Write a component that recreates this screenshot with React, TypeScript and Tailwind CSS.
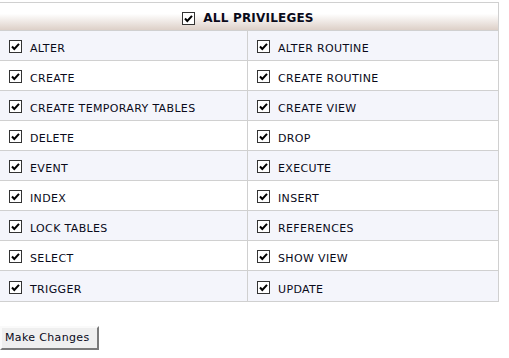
import React from 'react';

const rows: [string, string][] = [
  ['ALTER', 'ALTER ROUTINE'],
  ['CREATE', 'CREATE ROUTINE'],
  ['CREATE TEMPORARY TABLES', 'CREATE VIEW'],
  ['DELETE', 'DROP'],
  ['EVENT', 'EXECUTE'],
  ['INDEX', 'INSERT'],
  ['LOCK TABLES', 'REFERENCES'],
  ['SELECT', 'SHOW VIEW'],
  ['TRIGGER', 'UPDATE'],
];

// old-style checked box
function Check() {
  return (
    <span className="inline-flex h-[13px] w-[13px] shrink-0 items-center justify-center border border-[#333] bg-white">
      <svg width="9" height="9" viewBox="0 0 9 9">
        <path d="M1 4.5 L3.3 7 L8 1.8" fill="none" stroke="#000" strokeWidth="2" />
      </svg>
    </span>
  );
}

function Cell({ label }: { label: string }) {
  return (
    <div className="flex items-center gap-[8px] pl-[9px] pt-[2px]">
      <Check />
      <span className="relative top-[3px]">{label}</span>
    </div>
  );
}

export default function App() {
  return (
    <div className="h-[358px] w-[509px] bg-white pt-[2px] text-[11px] tracking-[0.35px] text-[#0a0a1a] font-['DejaVu_Sans',Verdana,sans-serif]">
      <div className="w-[499px] border-y border-r border-[#d0d0d0]">
        {/* 헤더 */}
        <div className="flex h-[28px] items-center justify-center gap-[8px] border-b border-[#d0d0d0] bg-gradient-to-b from-white from-40% to-[#ddd0c8] pr-[2px] pt-[3px]">
          <Check />
          <span className="text-[12px] font-bold tracking-[0.2px]">ALL PRIVILEGES</span>
        </div>

        {rows.map(([a, b], i) => (
          <div
            key={a}
            className={`grid h-[30px] grid-cols-[248px_1fr] ${i < rows.length - 1 ? 'border-b border-[#d0d0d0]' : ''} ${i % 2 === 0 ? 'bg-[#f4f5fb]' : 'bg-white'}`}
          >
            <div className="flex items-center border-r border-[#d0d0d0]">
              <Cell label={a} />
            </div>
            <div className="flex items-center">
              <Cell label={b} />
            </div>
          </div>
        ))}
      </div>

      <div className="mt-[24px]">
        <button className="h-[24px] w-[99px] border-2 border-t-[#fafafa] border-l-[#fafafa] border-b-[#7a7a7a] border-r-[#7a7a7a] bg-[#efefef] pl-[3px] text-left text-[11px] tracking-[0.35px] font-['DejaVu_Sans',Verdana,sans-serif] text-[#0a0a1a]">
          Make Changes
        </button>
      </div>
    </div>
  );
}
